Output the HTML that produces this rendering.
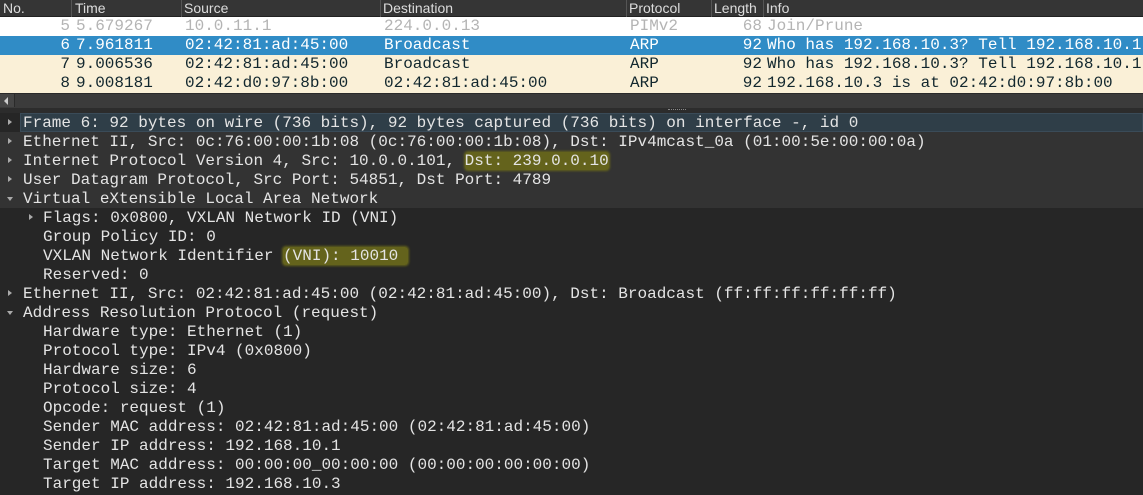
<!DOCTYPE html>
<html><head><meta charset="utf-8"><style>
*{margin:0;padding:0;box-sizing:border-box}
body{width:1143px;height:495px;overflow:hidden;background:#262626;font-family:"Liberation Mono",monospace;position:relative}
.hdr{position:absolute;left:0;top:0;width:1143px;height:17px;background:#353535;border-bottom:1px solid #222;font-family:"Liberation Sans",sans-serif;font-size:14px;color:#dcdcdc}
.hdr span{position:absolute;top:0px}
.hdr i{position:absolute;top:0;width:1px;height:17px;background:#555}
.row{position:absolute;left:0;width:1143px;height:19px;font-size:16px;line-height:19px;white-space:pre}
.row span{position:absolute;top:0}
.r{text-align:right}
.d{position:absolute;left:0;width:1143px;height:19px;font-size:16px;line-height:19px;color:#e4e4e4;white-space:pre}
.d span.t{position:absolute;top:1px}
.arr{position:absolute;width:0;height:0}
.rt{border-left:4px solid #aaa;border-top:3.5px solid transparent;border-bottom:3.5px solid transparent;top:6px}
.dn{border-top:4px solid #aaa;border-left:3.5px solid transparent;border-right:3.5px solid transparent;top:8px}
.hl{background:#64631c;border-radius:3px;box-shadow:0 0 2px 1px #64631c}
</style></head><body>
<div class="hdr">
<span style="left:3px">No.</span><i style="left:71px"></i>
<span style="left:75px">Time</span><i style="left:181px"></i>
<span style="left:184px">Source</span><i style="left:380px"></i>
<span style="left:383px">Destination</span><i style="left:626px"></i>
<span style="left:629px">Protocol</span><i style="left:711px"></i>
<span style="left:714px">Length</span><i style="left:763px"></i>
<span style="left:766px">Info</span>
</div>
<div class="row" style="top:17px;background:#fff;color:#b4b4b4"><span class="r" style="left:0;width:70px">5</span><span style="left:76px">5.679267</span><span style="left:185px">10.0.11.1</span><span style="left:384px">224.0.0.13</span><span style="left:630px">PIMv2</span><span class="r" style="left:700px;width:62px">68</span><span style="left:767px">Join/Prune</span></div>
<div class="row" style="top:36px;background:#308cc6;color:#fff"><span class="r" style="left:0;width:70px">6</span><span style="left:76px">7.961811</span><span style="left:185px">02:42:81:ad:45:00</span><span style="left:384px">Broadcast</span><span style="left:630px">ARP</span><span class="r" style="left:700px;width:62px">92</span><span style="left:767px">Who has 192.168.10.3? Tell 192.168.10.1</span></div>
<div class="row" style="top:55px;background:#faf0d7;color:#12272e"><span class="r" style="left:0;width:70px">7</span><span style="left:76px">9.006536</span><span style="left:185px">02:42:81:ad:45:00</span><span style="left:384px">Broadcast</span><span style="left:630px">ARP</span><span class="r" style="left:700px;width:62px">92</span><span style="left:767px">Who has 192.168.10.3? Tell 192.168.10.1</span></div>
<div class="row" style="top:74px;background:#faf0d7;color:#12272e"><span class="r" style="left:0;width:70px">8</span><span style="left:76px">9.008181</span><span style="left:185px">02:42:d0:97:8b:00</span><span style="left:384px">02:42:81:ad:45:00</span><span style="left:630px">ARP</span><span class="r" style="left:700px;width:62px">92</span><span style="left:767px">192.168.10.3 is at 02:42:d0:97:8b:00</span></div>
<div style="position:absolute;left:0;top:93px;width:1143px;height:15px;background:#3b3b3b;border-top:1px solid #2a2a2a"></div>
<div style="position:absolute;left:0;top:94px;width:14px;height:13px;background:#454545"></div>
<div class="arr" style="left:4px;top:97px;border-right:4px solid #ccc;border-top:4px solid transparent;border-bottom:4px solid transparent"></div>
<div style="position:absolute;left:14px;top:94px;width:1px;height:13px;background:#2a2a2a"></div>
<div style="position:absolute;left:0;top:108px;width:1143px;height:5px;background:#2c2c2c"></div>
<div style="position:absolute;left:668px;top:109px;width:18px;height:1px;border-top:1px dotted #888"></div>
<div style="position:absolute;left:0;top:132px;width:1143px;height:76px;background:#333"></div>
<div style="position:absolute;left:20px;top:113px;width:1123px;height:19px;background:#2f3e48;border:1px solid #3a4b58"></div>
<div class="d" style="top:113px"><i class="arr rt" style="left:8px"></i><span class="t" style="left:23px">Frame 6: 92 bytes on wire (736 bits), 92 bytes captured (736 bits) on interface -, id 0</span></div>
<div class="d" style="top:132px"><i class="arr rt" style="left:8px"></i><span class="t" style="left:23px">Ethernet II, Src: 0c:76:00:00:1b:08 (0c:76:00:00:1b:08), Dst: IPv4mcast_0a (01:00:5e:00:00:0a)</span></div>
<div class="d" style="top:151px"><i class="arr rt" style="left:8px"></i><span class="t" style="left:23px">Internet Protocol Version 4, Src: 10.0.0.101, <span class="hl">Dst: 239.0.0.10</span></span></div>
<div class="d" style="top:170px"><i class="arr rt" style="left:8px"></i><span class="t" style="left:23px">User Datagram Protocol, Src Port: 54851, Dst Port: 4789</span></div>
<div class="d" style="top:189px"><i class="arr dn" style="left:7px"></i><span class="t" style="left:23px">Virtual eXtensible Local Area Network</span></div>
<div class="d" style="top:208px"><i class="arr rt" style="left:29px"></i><span class="t" style="left:43px">Flags: 0x0800, VXLAN Network ID (VNI)</span></div>
<div class="d" style="top:227px"><span class="t" style="left:43px">Group Policy ID: 0</span></div>
<div class="d" style="top:246px"><span class="t" style="left:43px">VXLAN Network Identifier <span class="hl">(VNI): 10010 </span></span></div>
<div class="d" style="top:265px"><span class="t" style="left:43px">Reserved: 0</span></div>
<div class="d" style="top:284px"><i class="arr rt" style="left:8px"></i><span class="t" style="left:23px">Ethernet II, Src: 02:42:81:ad:45:00 (02:42:81:ad:45:00), Dst: Broadcast (ff:ff:ff:ff:ff:ff)</span></div>
<div class="d" style="top:303px"><i class="arr dn" style="left:7px"></i><span class="t" style="left:23px">Address Resolution Protocol (request)</span></div>
<div class="d" style="top:322px"><span class="t" style="left:43px">Hardware type: Ethernet (1)</span></div>
<div class="d" style="top:341px"><span class="t" style="left:43px">Protocol type: IPv4 (0x0800)</span></div>
<div class="d" style="top:360px"><span class="t" style="left:43px">Hardware size: 6</span></div>
<div class="d" style="top:379px"><span class="t" style="left:43px">Protocol size: 4</span></div>
<div class="d" style="top:398px"><span class="t" style="left:43px">Opcode: request (1)</span></div>
<div class="d" style="top:417px"><span class="t" style="left:43px">Sender MAC address: 02:42:81:ad:45:00 (02:42:81:ad:45:00)</span></div>
<div class="d" style="top:436px"><span class="t" style="left:43px">Sender IP address: 192.168.10.1</span></div>
<div class="d" style="top:455px"><span class="t" style="left:43px">Target MAC address: 00:00:00_00:00:00 (00:00:00:00:00:00)</span></div>
<div class="d" style="top:474px"><span class="t" style="left:43px">Target IP address: 192.168.10.3</span></div>
</body></html>
